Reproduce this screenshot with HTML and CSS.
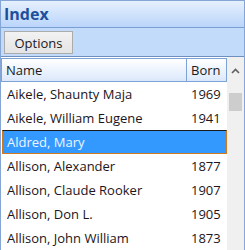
FILE: index.html
```html
<!DOCTYPE html>
<html lang="en">
<head>
    <meta charset="UTF-8">
    <title>Index</title>
    <link rel="stylesheet" href="styles.css">
</head>
<body>
    <div class="panel">
        <div class="title">Index</div>
        <div class="toolbar">
            <button class="btn">Options</button>
        </div>
        <div class="list">
            <div class="grid">
                <div class="head">
                    <div class="col-name">Name</div>
                    <div class="col-born">Born</div>
                </div>
                <div class="row">
                    <div class="col-name">Aikele, Shaunty Maja</div>
                    <div class="col-born">1969</div>
                </div>
                <div class="row">
                    <div class="col-name">Aikele, William Eugene</div>
                    <div class="col-born">1941</div>
                </div>
                <div class="row selected">
                    <div class="col-name">Aldred, Mary</div>
                    <div class="col-born"></div>
                </div>
                <div class="row">
                    <div class="col-name">Allison, Alexander</div>
                    <div class="col-born">1877</div>
                </div>
                <div class="row">
                    <div class="col-name">Allison, Claude Rooker</div>
                    <div class="col-born">1907</div>
                </div>
                <div class="row">
                    <div class="col-name">Allison, Don L.</div>
                    <div class="col-born">1905</div>
                </div>
                <div class="row">
                    <div class="col-name">Allison, John William</div>
                    <div class="col-born">1873</div>
                </div>
            </div>
            <div class="scrollbar">
                <div class="arrow">
                    <svg width="9" height="6" viewBox="0 0 9 6">
                        <path d="M1 5 L4.5 1.5 L8 5" fill="none" stroke="#606060" stroke-width="1.6"/>
                    </svg>
                </div>
                <div class="thumb"></div>
            </div>
        </div>
    </div>
</body>
</html>
```

FILE: styles.css
```css
body {
    margin: 0;
    font-family: 'Open Sans', 'Noto Sans', sans-serif;
    background-color: #fff;
}

.panel {
    width: 245px;
    height: 250px;
    box-sizing: border-box;
    border: 1px solid #84a5d6;
    border-bottom: none;
    overflow: hidden;
    display: flex;
    flex-direction: column;
}

.title {
    height: 27px;
    border-bottom: 1px solid #7c9fd3;
    background: linear-gradient(#e6f0fd, #bad5fa);
    color: #1d4f9c;
    font-weight: bold;
    font-size: 16px;
    line-height: 26px;
    padding-left: 3px;
}

.toolbar {
    height: 29px;
    border-bottom: 1px solid #6f8fbf;
    background-color: #c2dbfa;
    display: flex;
    align-items: center;
    padding-left: 3px;
}

.btn {
    width: 69px;
    height: 23px;
    margin-top: 1px;
    padding: 0;
    border: 1px solid #acacac;
    background: linear-gradient(#f2f2f2, #e4e4e4);
    font-family: inherit;
    font-size: 13px;
    color: #1a1a1a;
}

.list {
    flex: 1;
    display: flex;
    background-color: #fff;
}

.grid {
    flex: 1;
    padding-top: 1px;
}

.head {
    display: flex;
    height: 22px;
    border: 1px solid #7da2d6;
    background: linear-gradient(#ffffff, #dbe8fb);
    font-size: 13px;
    line-height: 22px;
    color: #1a1a1a;
}

.head .col-born {
    border-left: 1px solid #7da2d6;
}

.col-name {
    width: 180px;
    padding-left: 4px;
}

.col-born {
    flex: 1;
    padding-left: 4px;
}

.row {
    display: flex;
    height: 24px;
    box-sizing: border-box;
    font-size: 13px;
    line-height: 22px;
    color: #1c1420;
    border: 1px solid transparent;
    margin-left: 1px;
}

.row .col-name {
    width: 179px;
}

.row .col-born {
    padding-left: 5px;
}

.row.selected {
    background-color: #3399ff;
    color: #eef5ff;
    border-color: #cf7a20;
    border-top-color: #1a1a1a;
}

.scrollbar {
    width: 17px;
    background-color: #f0f0f0;
    display: flex;
    flex-direction: column;
    align-items: center;
}

.arrow {
    height: 24px;
    display: flex;
    align-items: center;
    justify-content: center;
    margin-top: 2px;
    margin-bottom: 10px;
}

.thumb {
    width: 13px;
    height: 18px;
    background-color: #cdcdcd;
}
```
